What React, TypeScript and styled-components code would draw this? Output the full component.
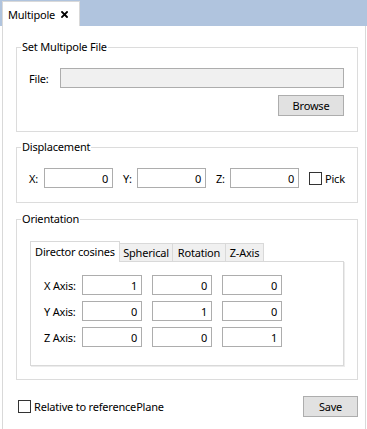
import { Fragment } from 'react';
import styled, { createGlobalStyle } from 'styled-components';

const GlobalStyle = createGlobalStyle`
  html, body {
    margin: 0;
    padding: 0;
    background: #fff;
  }
  body {
    font-family: 'Noto Sans', 'DejaVu Sans', sans-serif;
    font-size: 11px;
    letter-spacing: -0.2px;
    color: #000;
  }
  * {
    box-sizing: border-box;
  }
`;

const Window = styled.div`
  width: 367px;
  height: 429px;
  display: flex;
  flex-direction: column;
  overflow: hidden;
  background: #fff;
`;

const TabBar = styled.div`
  flex: none;
  height: 26px;
  background: #b0c4de;
  display: flex;
  align-items: flex-end;
  padding-left: 2px;
`;

const DocTab = styled.div`
  width: 78px;
  height: 25px;
  background: #fff;
  border: 1px solid #d9d9d9;
  border-bottom: none;
  display: flex;
  align-items: center;
  justify-content: space-between;
  padding: 0 11px 0 5px;
`;

const Panel = styled.div`
  flex: 1;
  margin: 0 1px 0 2px;
  border-left: 1px solid #d9d9d9;
  border-right: 1px solid #d9d9d9;
  padding: 13px 7px 0 13px;
  display: flex;
  flex-direction: column;
`;

const GroupBox = styled.fieldset<{ $mt?: number }>`
  margin: ${p => p.$mt ?? 0}px 0 0 0;
  padding: 0;
  min-width: 0;
  border: 1px solid #dcdcdc;
`;

const Legend = styled.legend`
  margin-left: 4px;
  padding: 0 1px;
  line-height: 16px;
  font-size: 11px;
`;

const GroupBody = styled.div<{ $pad: string }>`
  padding: ${p => p.$pad};
  display: flex;
  flex-direction: column;
`;

const Row = styled.div`
  display: flex;
  align-items: center;
`;

const ButtonRow = styled.div`
  display: flex;
  justify-content: flex-end;
  margin-top: 7px;
`;

const FieldLabel = styled.span<{ $w: number }>`
  flex: none;
  width: ${p => p.$w}px;
  white-space: nowrap;
`;

const TextBox = styled.div<{ $w?: number; $disabled?: boolean }>`
  flex: ${p => (p.$w ? 'none' : '1')};
  width: ${p => (p.$w ? `${p.$w}px` : 'auto')};
  height: 20px;
  border: 1px solid #adadad;
  background: ${p => (p.$disabled ? '#f0f0f0' : '#fff')};
  display: flex;
  align-items: center;
  justify-content: flex-end;
  padding-right: 4px;
`;

const Spacer = styled.span<{ $w: number }>`
  flex: none;
  width: ${p => p.$w}px;
`;

const Button = styled.button<{ $w: number }>`
  width: ${p => p.$w}px;
  height: 21px;
  border: 1px solid #adadad;
  background: #e1e1e1;
  font: inherit;
  letter-spacing: inherit;
  color: #000;
  padding: 0;
`;

const CheckRow = styled.label`
  display: flex;
  align-items: center;
  gap: 3px;
`;

const CheckBox = styled.input.attrs({ type: 'checkbox' })`
  appearance: none;
  margin: 0;
  width: 13px;
  height: 13px;
  border: 1px solid #333;
  background: #fff;
`;

const TabStrip = styled.div`
  display: flex;
  align-items: flex-end;
  height: 21px;
  margin-bottom: -1px;
`;

const Tab = styled.div<{ $active?: boolean; $w: number }>`
  position: relative;
  z-index: ${p => (p.$active ? 2 : 1)};
  flex: none;
  width: ${p => p.$w}px;
  height: ${p => (p.$active ? 21 : 18)}px;
  margin-bottom: ${p => (p.$active ? 0 : 1)}px;
  margin-left: ${p => (p.$active ? 0 : -1)}px;
  padding-bottom: ${p => (p.$active ? 2 : 0)}px;
  border: 1px solid #d9d9d9;
  border-bottom: none;
  background: ${p => (p.$active ? '#fff' : '#f0f0f0')};
  display: flex;
  align-items: center;
  justify-content: center;
  white-space: nowrap;
`;

const TabPane = styled.div`
  border: 1px solid #d9d9d9;
  box-shadow: 1px 1px 0 #ececec;
  padding: 13px 0 18px 13px;
`;

const AxisGrid = styled.div`
  display: grid;
  grid-template-columns: 28px repeat(3, 60px);
  column-gap: 10px;
  row-gap: 6px;
  align-items: center;
`;

const Footer = styled.div`
  display: flex;
  align-items: center;
  justify-content: space-between;
  margin-top: 16px;
  padding-left: 2px;
`;

function CloseIcon() {
  return (
    <svg width="7" height="7" viewBox="0 0 7 7">
      <path d="M1 1 L6 6 M6 1 L1 6" stroke="#000" strokeWidth="1.8" strokeLinecap="square" />
    </svg>
  );
}

const matrix = [
  ['X Axis:', '1', '0', '0'],
  ['Y Axis:', '0', '1', '0'],
  ['Z Axis:', '0', '0', '1'],
];

export default function App() {
  return (
    <Window>
      <GlobalStyle />
      <TabBar>
        <DocTab>
          <span>Multipole</span>
          <CloseIcon />
        </DocTab>
      </TabBar>
      <Panel>
        <GroupBox>
          <Legend>Set Multipole File</Legend>
          <GroupBody $pad="13px 13px 15px 12px">
            <Row>
              <FieldLabel $w={31}>File:</FieldLabel>
              <TextBox $disabled />
            </Row>
            <ButtonRow>
              <Button $w={66}>Browse</Button>
            </ButtonRow>
          </GroupBody>
        </GroupBox>

        <GroupBox $mt={7}>
          <Legend>Displacement</Legend>
          <GroupBody $pad="13px 13px 14px 12px">
            <Row>
              <FieldLabel $w={15}>X:</FieldLabel>
              <TextBox $w={69}>0</TextBox>
              <Spacer $w={10} />
              <FieldLabel $w={14}>Y:</FieldLabel>
              <TextBox $w={69}>0</TextBox>
              <Spacer $w={10} />
              <FieldLabel $w={14}>Z:</FieldLabel>
              <TextBox $w={69}>0</TextBox>
              <Spacer $w={10} />
              <CheckRow>
                <CheckBox />
                Pick
              </CheckRow>
            </Row>
          </GroupBody>
        </GroupBox>

        <GroupBox $mt={8}>
          <Legend>Orientation</Legend>
          <GroupBody $pad="14px 13px 13px 13px">
            <TabStrip>
              <Tab $active $w={90}>Director cosines</Tab>
              <Tab $w={54}>Spherical</Tab>
              <Tab $w={54}>Rotation</Tab>
              <Tab $w={39}>Z-Axis</Tab>
            </TabStrip>
            <TabPane>
              <AxisGrid>
                {matrix.map(row => (
                  <Fragment key={row[0]}>
                    <FieldLabel $w={28}>{row[0]}</FieldLabel>
                    {row.slice(1).map((v, i) => (
                      <TextBox key={i}>{v}</TextBox>
                    ))}
                  </Fragment>
                ))}
              </AxisGrid>
            </TabPane>
          </GroupBody>
        </GroupBox>

        <Footer>
          <CheckRow>
            <CheckBox />
            Relative to referencePlane
          </CheckRow>
          <Button $w={55}>Save</Button>
        </Footer>
      </Panel>
    </Window>
  );
}
